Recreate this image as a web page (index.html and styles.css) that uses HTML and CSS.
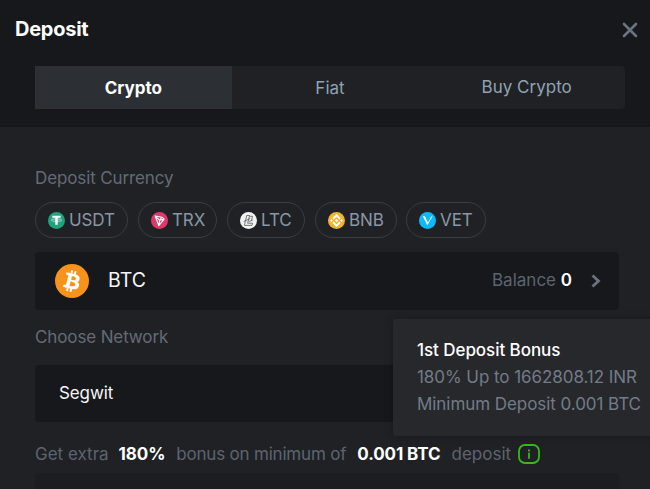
FILE: index.html
```html
<!DOCTYPE html>
<html lang="en">
<head>
  <meta charset="UTF-8">
  <meta name="viewport" content="width=device-width, initial-scale=1">
  <title>Deposit</title>
  <link rel="stylesheet" href="styles.css">
</head>
<body>
  <div class="dialog">
    <!-- Header -->
    <header class="header">
      <div class="title-bar">
        <h1 class="title">Deposit</h1>
        <button class="close" aria-label="Close">
          <svg width="16" height="16" viewBox="0 0 16 16"><path d="M2 2l12 12M14 2L2 14"/></svg>
        </button>
      </div>
      <nav class="tabs">
        <button class="tab active">Crypto</button>
        <button class="tab">Fiat</button>
        <button class="tab tab-buy">Buy Crypto</button>
      </nav>
    </header>

    <!-- Form -->
    <main class="content">
      <div class="label">Deposit Currency</div>
      <div class="coins">
        <button class="coin usdt">
          <svg class="coin-icon" viewBox="0 0 17 17"><circle cx="8.5" cy="8.5" r="8.5" fill="#1fa37c"/><path d="M4.3 3.8h8.4v2H9.7v7H7.3v-7h-3z" fill="#fff"/><ellipse cx="8.5" cy="8.1" rx="5.2" ry="1.2" fill="none" stroke="#fff" stroke-width=".6"/></svg>
          <span>USDT</span>
        </button>
        <button class="coin trx">
          <svg class="coin-icon" viewBox="0 0 17 17"><circle cx="8.5" cy="8.5" r="8.5" fill="#e0386a"/><path d="M4.2 4l6.8 1.2 2.1 2-5.3 6.5zM4.2 4l4.5 4.3 2.3-3.1M8.7 8.3l4.4-1.1M8.7 8.3l-.9 5.4" fill="none" stroke="#fff" stroke-width="1.1" stroke-linejoin="round"/></svg>
          <span>TRX</span>
        </button>
        <button class="coin ltc">
          <svg class="coin-icon" viewBox="0 0 17 17"><circle cx="8.5" cy="8.5" r="8.5" fill="#f2f2f2"/><path d="M6.7 3.5h2.9L8.2 9.2l-.6 2h5l-.6 2.2H4.4l1-4zM3.7 9.5l6.5-3M10 4.3h2.5l-1 4.2M9 9.5l3.8-1.4" fill="none" stroke="#66686b" stroke-width=".9"/></svg>
          <span>LTC</span>
        </button>
        <button class="coin bnb">
          <svg class="coin-icon" viewBox="0 0 17 17"><circle cx="8.5" cy="8.5" r="8.5" fill="#f3b32d"/><path d="M5 6.8l3.5-3.4L12 6.8M5 10.2l3.5 3.4 3.5-3.4" fill="none" stroke="#fff" stroke-width="1.9"/><path d="M8.5 6.7l1.8 1.8-1.8 1.8-1.8-1.8zM3.5 7.1l1.4 1.4-1.4 1.4-1.4-1.4zM13.5 7.1l1.4 1.4-1.4 1.4-1.4-1.4z" fill="#fff"/></svg>
          <span>BNB</span>
        </button>
        <button class="coin vet">
          <svg class="coin-icon" viewBox="0 0 17 17"><circle cx="8.5" cy="8.5" r="8.5" fill="#0db9fb"/><path d="M3.7 4.2h1.8l3.4 6.7-.8 1.9z" fill="#fff"/><path d="M4.3 4.5h1.2l3 6M13 4.2l-4.7 8.4" fill="none" stroke="#fff" stroke-width=".9"/></svg>
          <span>VET</span>
        </button>
      </div>

      <div class="field currency">
        <svg class="btc-icon" viewBox="0 0 34 34"><circle cx="17" cy="17" r="17" fill="#f7931a"/><path fill="#fff" fill-rule="evenodd" d="M24.6 14.9c.3-2.3-1.4-3.5-3.8-4.3l.8-3.1-1.9-.5-.8 3-1.5-.3.8-3.1-1.9-.5-.8 3.1-4-1-.5 2.1 1.4.4c.8.2.9.7.9 1.1l-2.2 8.6c-.1.2-.3.6-.9.4l-1.4-.3-.9 2.2 3.9 1-.8 3.1 1.9.5.8-3.1 1.5.4-.8 3.1 1.9.5.8-3.1c3.2.6 5.7.4 6.7-2.6.8-2.3 0-3.7-1.7-4.6 1.3-.3 2.2-1.1 2.5-3zm-4.3 6.1c-.6 2.3-4.5 1.1-5.8.7l1-4.1c1.3.3 5.4 1 4.8 3.4zm.6-6.1c-.5 2.1-3.8 1-4.8.8l.9-3.8c1.1.3 4.5.8 3.9 3z"/></svg>
        <span class="currency-name">BTC</span>
        <span class="balance">Balance <b>0</b></span>
        <svg class="arrow" width="10" height="14" viewBox="0 0 10 14"><path d="M1.5 1.5L7.5 7l-6 5.5"/></svg>
      </div>

      <div class="label label-network">Choose Network</div>
      <div class="network-wrap">
        <div class="field network">Segwit</div>
        <div class="tooltip">
          <div class="tooltip-title">1st Deposit Bonus</div>
          <div class="tooltip-amount">180% Up to 1662808.12 INR</div>
          <div class="tooltip-min">Minimum Deposit 0.001 BTC</div>
        </div>
      </div>

      <div class="bonus">
        <span class="bonus-get">Get extra</span>
        <b class="bonus-rate">180%</b>
        <span class="bonus-on">bonus on minimum of</span>
        <b class="bonus-min">0.001 BTC</b>
        <span class="bonus-deposit">deposit</span>
        <svg class="info" width="22" height="20" viewBox="0 0 22 20"><rect x="1" y="1" width="20" height="18" rx="6"/><path d="M11 5.5v2M11 8.8v6"/></svg>
      </div>
      <div class="address"></div>
    </main>
  </div>
</body>
</html>
```

FILE: styles.css
```css
* {
  margin: 0;
  padding: 0;
  box-sizing: border-box;
}

html, body {
  height: 100%;
  overflow: hidden;
  font-family: Inter, sans-serif;
  font-size: 17px;
  background: #202125;
}

button {
  font: inherit;
  background: none;
  border: 0;
  cursor: pointer;
}

span, b, .label, .tooltip {
  white-space: nowrap;
}

.dialog {
  height: 489px;
  overflow: hidden;
}

/* === HEADER === */
.header {
  height: 127px;
  background: #17181b;
}

.title-bar {
  display: flex;
  justify-content: space-between;
  align-items: center;
  height: 66px;
  padding: 0 12px 6px 15px;
}

.title {
  margin-top: -2px;
  font-size: 20px;
  font-weight: 700;
  letter-spacing: -0.25px;
  color: #fff;
}

.close {
  display: flex;
}

.close svg {
  fill: none;
  stroke: #6b7381;
  stroke-width: 2.6;
  stroke-linecap: round;
}

.tabs {
  display: grid;
  grid-template-columns: repeat(3, 1fr);
  height: 43px;
  margin: 0 25px 0 35px;
  background: #202124;
  border-radius: 0 4px 4px 0;
  overflow: hidden;
}

.tab {
  color: #8fa3b3;
}

.tab.active {
  font-weight: 700;
  color: #fff;
  background: #2c2f33;
}

.tab-buy {
  padding-bottom: 2px;
}

/* === FORM === */
.content {
  padding: 40px 31px 0 35px;
}

.label {
  height: 35px;
  line-height: 22px;
  letter-spacing: -0.12px;
  color: #646b77;
}

.coins {
  display: flex;
  gap: 10px;
}

.coin {
  display: flex;
  align-items: center;
  gap: 4px;
  height: 36px;
  padding: 0 12px;
  border: 1px solid #3b3c45;
  border-radius: 18px;
  letter-spacing: -0.1px;
  color: #8997a6;
}

.coin-icon {
  flex: none;
  width: 17px;
  height: 17px;
}

.usdt { width: 93px; }
.trx { width: 79px; }
.ltc { width: 78px; }
.bnb { width: 82px; }
.vet { width: 80px; margin-left: -1px; }

.field {
  display: flex;
  align-items: center;
  background: #17181b;
  border-radius: 4px;
  color: #f5f6f7;
}

.currency {
  height: 58px;
  margin-top: 14px;
  padding: 0 18px 0 20px;
}

.btc-icon {
  width: 34px;
  height: 34px;
}

.currency-name {
  margin-left: 19px;
  padding-bottom: 2px;
  font-size: 19.5px;
}

.balance {
  margin-left: auto;
  padding-bottom: 2px;
  color: #5d6470;
}

.balance b {
  font-weight: 600;
  color: #fff;
}

.arrow {
  margin-left: 19px;
  fill: none;
  stroke: #6b7381;
  stroke-width: 2.8;
}

.label-network {
  height: 39px;
  margin-top: 16px;
}

.network-wrap {
  position: relative;
}

.network {
  height: 57px;
  padding: 0 0 2px 24px;
  letter-spacing: -0.1px;
}

/* === TOOLTIP === */
.tooltip {
  position: absolute;
  top: -46px;
  left: 358px;
  width: 270px;
  height: 117px;
  padding: 18px 24px;
  line-height: 27px;
  letter-spacing: -0.06px;
  color: #737b87;
  background: #27282c;
  border-radius: 4px;
  box-shadow: 0 0 10px rgba(0, 0, 0, 0.25);
}

.tooltip-title {
  font-weight: 500;
  color: #fff;
}

/* === BONUS === */
.bonus {
  display: flex;
  align-items: center;
  height: 51px;
  padding-top: 12px;
  color: #5d6470;
}

.bonus b {
  font-weight: 700;
  letter-spacing: -0.1px;
  color: #fff;
}

.bonus-rate {
  margin-left: 10px;
}

.bonus-on {
  margin-left: 11px;
  letter-spacing: -0.2px;
}

.bonus-min,
.bonus-deposit {
  margin-left: 11px;
}

.info {
  margin-left: 7px;
  fill: none;
  stroke: #35bb12;
  stroke-width: 1.8;
}

.address {
  height: 60px;
  background: #1c1d20;
  border-radius: 4px;
}
```
